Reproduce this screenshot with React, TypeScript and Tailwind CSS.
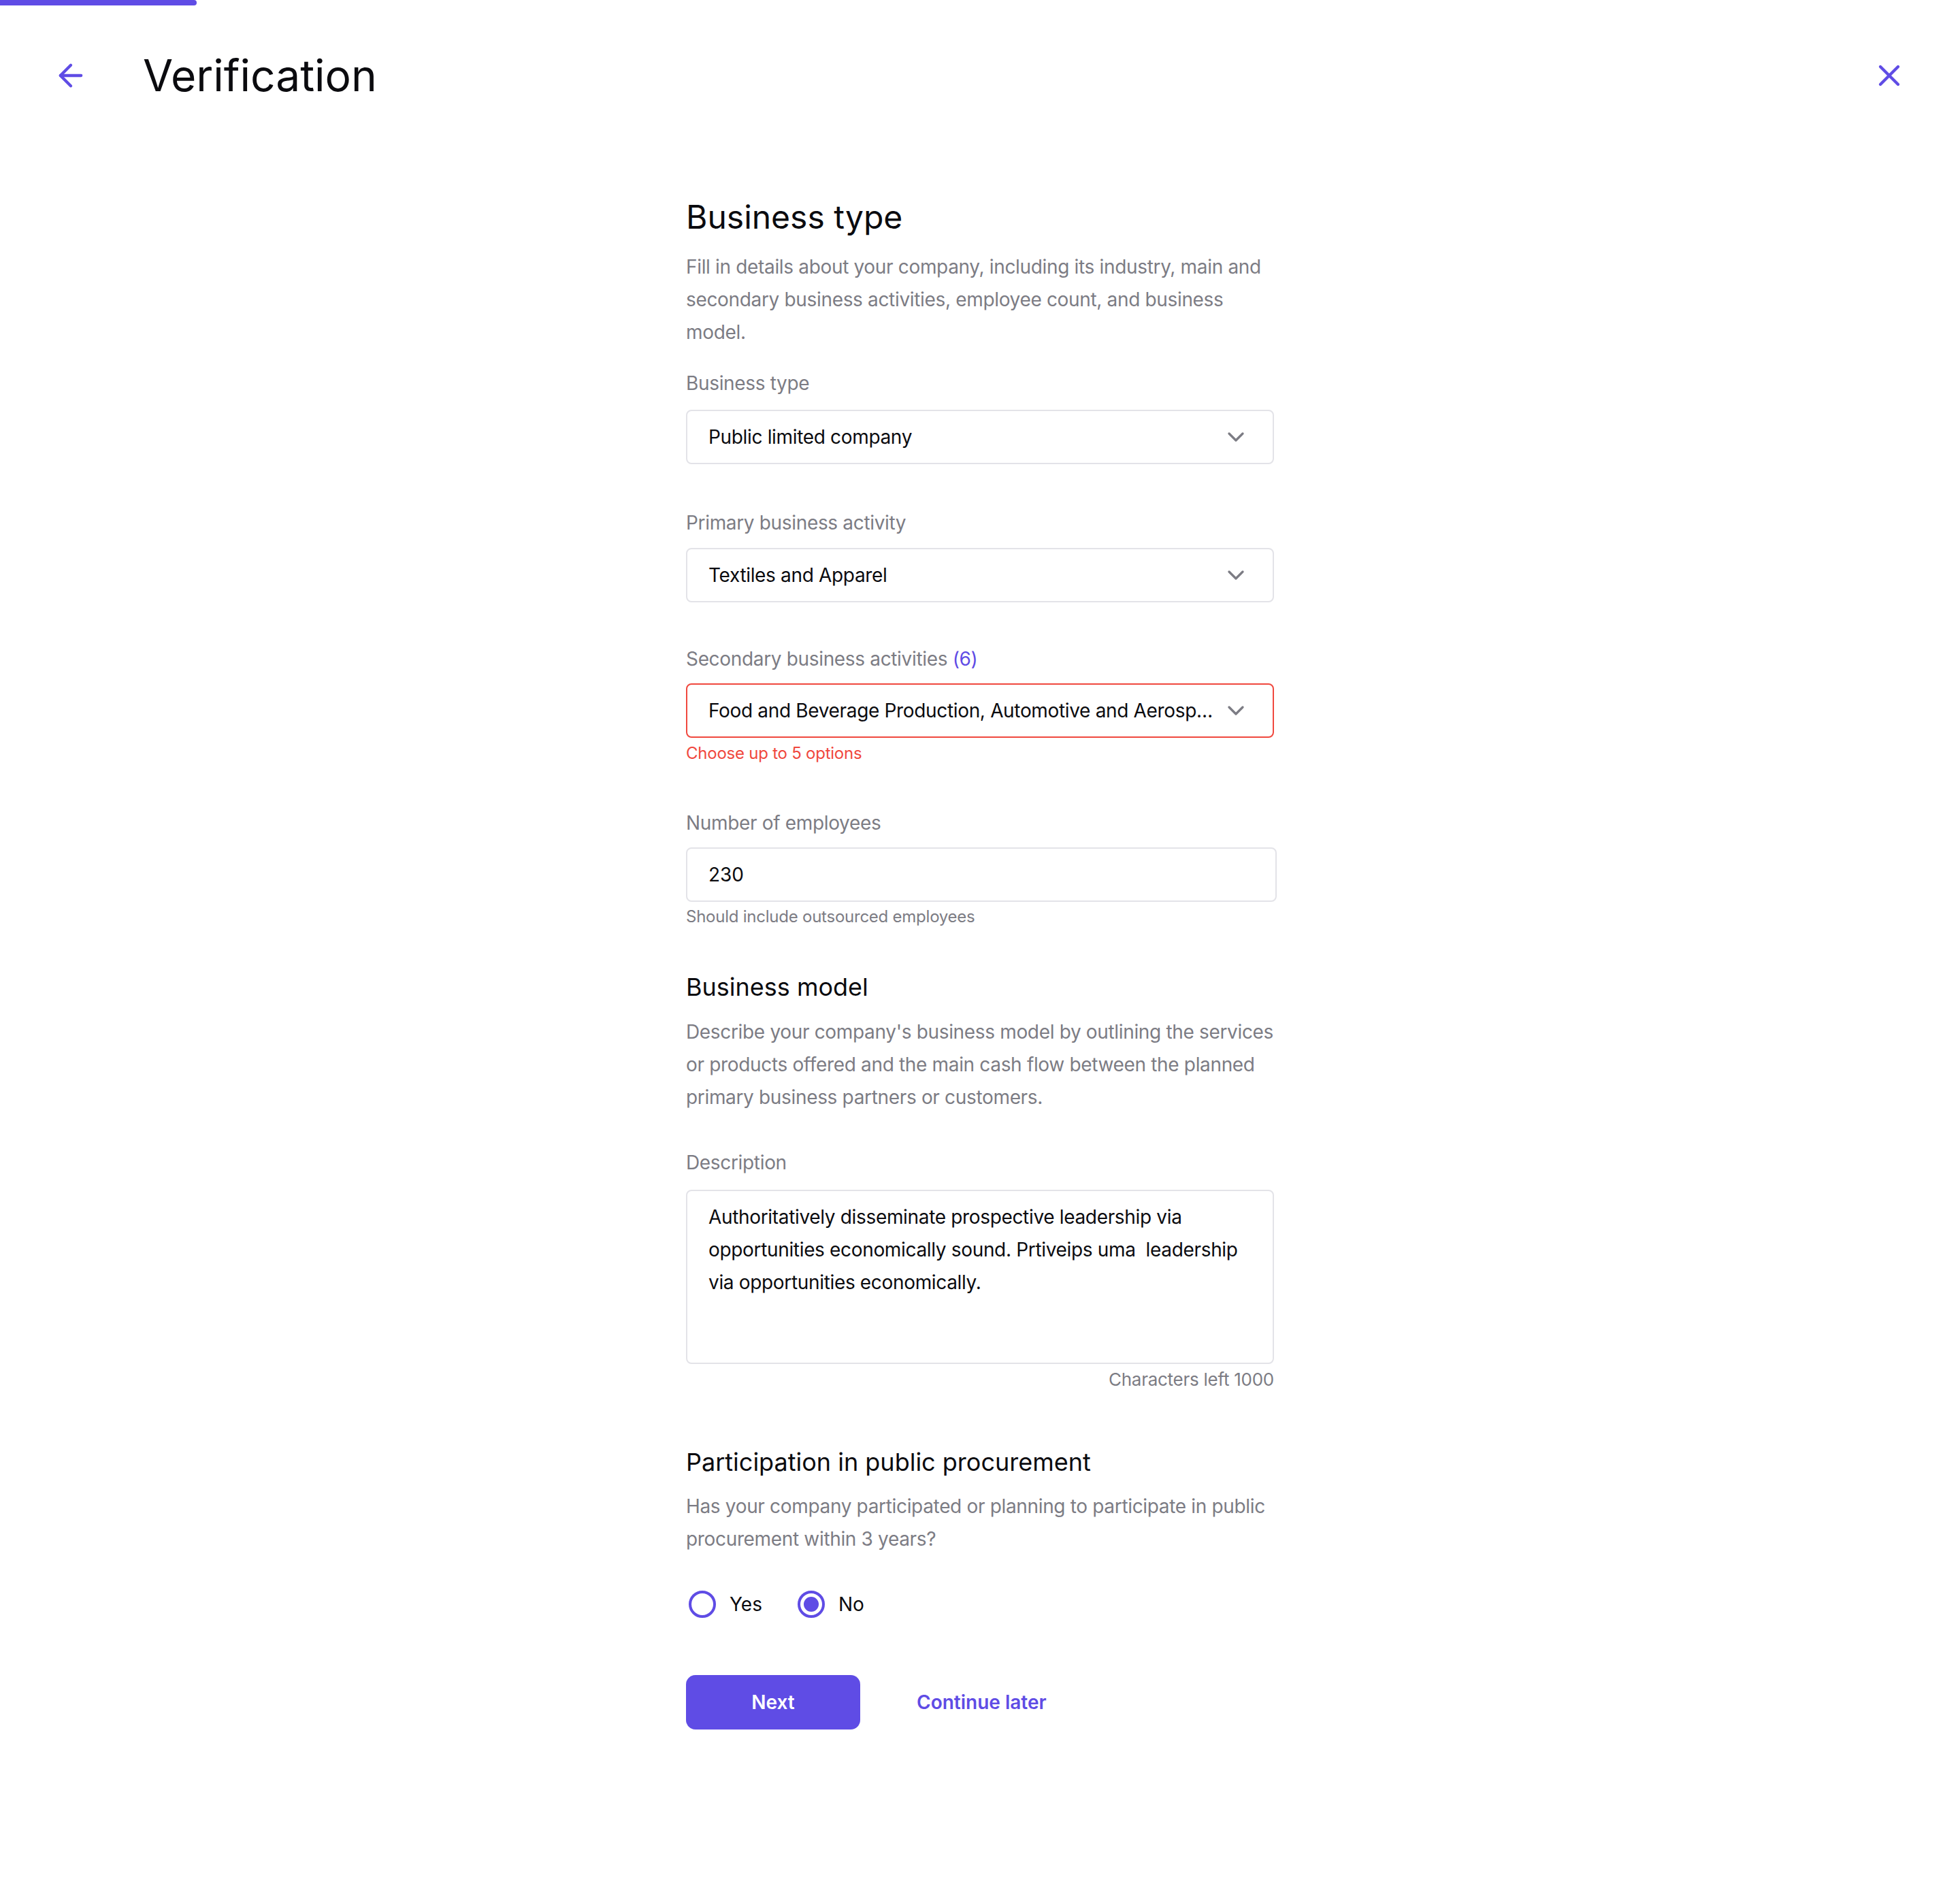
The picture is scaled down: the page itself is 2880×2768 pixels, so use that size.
import React from 'react';
import { ArrowLeft, X, ChevronDown } from 'lucide-react';

const font = 'font-["Inter",sans-serif]';

type SelectProps = {
  value: string;
  error?: boolean;
  className?: string;
};

const FakeSelect: React.FC<SelectProps> = ({ value, error, className }) => {
  return (
    <div
      className={`flex h-[80px] items-center gap-3 rounded-[8px] border-2 bg-white pl-[31px] pr-[34px] ${
        error ? 'border-[#F0483E]' : 'border-[#E3E3E8]'
      } ${className ?? ''}`}
    >
      <span className="min-w-0 flex-1 truncate text-[28px] leading-[40px] tracking-[-0.012em] text-[#0B0B0F]">
        {value}
      </span>
      <ChevronDown size={40} strokeWidth={2} className="shrink-0 text-[#7C7C84]" />
    </div>
  );
};

const Label: React.FC<{ children: React.ReactNode; className?: string }> = ({ children, className }) => (
  <div className={`text-[28px] leading-[40px] tracking-[-0.012em] text-[#7C7C84] ${className ?? ''}`}>{children}</div>
);

const Radio: React.FC<{ label: string; checked?: boolean }> = ({ label, checked }) => (
  <label className="flex items-center gap-5">
    <span className="flex h-[40px] w-[40px] items-center justify-center rounded-full border-4 border-[#5F4CE5]">
      {checked && <span className="h-[22px] w-[22px] rounded-full bg-[#5F4CE5]" />}
    </span>
    <span className="text-[28px] leading-[40px] text-[#0B0B0F]">{label}</span>
  </label>
);

const App: React.FC = () => {
  return (
    <div className={`min-h-screen bg-white ${font}`}>
      {/* progress */}
      <div className="h-[8px] w-[289px] rounded-r-full bg-[#5F4CE5]" />

      <header className="mt-[77px] flex h-[52px] items-center justify-between px-[78px]">
        <div className="flex items-center gap-[80px]">
          <button className="text-[#5F4CE5]">
            <ArrowLeft size={52} strokeWidth={2} />
          </button>
          <h1 className="text-[64px] leading-none font-normal text-[#0B0B0F]">Verification</h1>
        </div>
        <button className="text-[#5F4CE5]">
          <X size={52} strokeWidth={2} />
        </button>
      </header>

      <main className="mx-auto mt-[154px] w-[864px] pb-[228px]">
        <h2 className="text-[48px] leading-[56px] font-normal text-[#0B0B0F]">Business type</h2>
        <p className="mt-[21px] text-[28px] leading-[48px] tracking-[-0.012em] whitespace-nowrap text-[#7C7C84]">
          Fill in details about your company, including its industry, main and
          <br />
          secondary business activities, employee count, and business
          <br />
          model.
        </p>

        <Label className="mt-[31px]">Business type</Label>
        <FakeSelect className="mt-[19px]" value="Public limited company" />

        <Label className="mt-[66px]">Primary business activity</Label>
        <FakeSelect className="mt-[17px]" value="Textiles and Apparel" />

        <Label className="mt-[63px]">
          Secondary business activities <span className="text-[#5F4CE5]">(6)</span>
        </Label>
        <FakeSelect className="mt-[16px]" error value="Food and Beverage Production, Automotive and Aerosp…" />
        <div className="mt-[7px] text-[24px] leading-[32px] tracking-[-0.01em] text-[#F0483E]">Choose up to 5 options</div>

        <Label className="mt-[66px]">Number of employees</Label>
        <input
          readOnly
          defaultValue="230"
          className="mt-[16px] h-[80px] w-[868px] rounded-[8px] border-2 border-[#E3E3E8] bg-white pl-[31px] text-[28px] text-[#0B0B0F] outline-none"
        />
        <div className="mt-[6px] text-[24px] leading-[32px] tracking-[-0.01em] text-[#7C7C84]">
          Should include outsourced employees
        </div>

        <h3 className="mt-[65px] text-[36px] leading-[44px] font-normal text-[#0B0B0F]">Business model</h3>
        <p className="mt-[20px] text-[28px] leading-[48px] tracking-[-0.012em] whitespace-nowrap text-[#7C7C84]">
          Describe your company's business model by outlining the services
          <br />
          or products offered and the main cash flow between the planned
          <br />
          primary business partners or customers.
        </p>

        <Label className="mt-[52px]">Description</Label>
        <textarea
          readOnly
          defaultValue="Authoritatively disseminate prospective leadership via opportunities economically sound. Prtiveips uma  leadership via opportunities economically."
          className="mt-[20px] block h-[256px] w-full resize-none rounded-[8px] border-2 border-[#E3E3E8] bg-white px-[31px] pt-[14px] text-[28px] leading-[48px] tracking-[-0.012em] text-[#0B0B0F] outline-none"
        />
        <div className="mt-[5px] text-right text-[26px] leading-[36px] tracking-[-0.01em] text-[#7C7C84]">
          Characters left 1000
        </div>

        <h3 className="mt-[81px] text-[36px] leading-[44px] font-normal text-[#0B0B0F]">
          Participation in public procurement
        </h3>
        <p className="mt-[19px] text-[28px] leading-[48px] tracking-[-0.012em] whitespace-nowrap text-[#7C7C84]">
          Has your company participated or planning to participate in public
          <br />
          procurement within 3 years?
        </p>

        <div className="mt-[52px] flex items-center gap-[52px] pl-[4px]">
          <Radio label="Yes" />
          <Radio label="No" checked />
        </div>

        <div className="mt-[84px] flex items-center gap-[83px]">
          <button className="h-[80px] w-[256px] rounded-[14px] bg-[#5F4CE5] text-[28px] font-semibold text-white">
            Next
          </button>
          <button className="text-[28px] font-semibold text-[#5F4CE5]">Continue later</button>
        </div>
      </main>
    </div>
  );
};

export default App;
